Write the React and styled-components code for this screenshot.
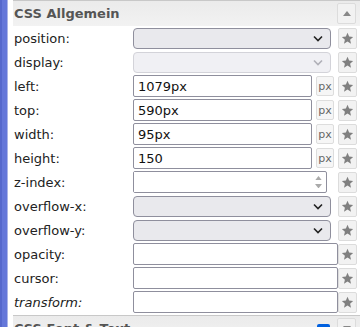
import React from "react";
import styled, { createGlobalStyle } from "styled-components";

const GlobalStyle = createGlobalStyle`
  body {
    margin: 0;
    background: #fff;
    font-family: "DejaVu Sans", Verdana, sans-serif;
    font-size: 13px;
    color: #222;
  }
`;

const Page = styled.div`
  display: flex;
  width: 363px;
  height: 327px;
  overflow: hidden;
`;
const Strip = styled.div`
  width: 8px;
  flex: none;
  background: #6477d9;
  border-left: 2px solid #5568cc;
  box-sizing: border-box;
  border-right: 1px solid #aab4e8;
`;
const Panel = styled.div`
  margin-left: 5px;
  width: 347px;
  display: flex;
  flex-direction: column;
`;
const Header = styled.div`
  height: 26px;
  flex: none;
  display: flex;
  align-items: center;
  box-sizing: border-box;
  border-top: 1px solid #c8c8c8;
  background: linear-gradient(#ebebeb, #f2f2f2);
  padding-left: 1px;
  margin-top: ${(p) => p.gap || 0}px;
  font-weight: bold;
  color: #555;
`;
const HeaderTitle = styled.span`
  flex: 1;
`;
const Row = styled.div`
  height: 24px;
  flex: none;
  display: flex;
  align-items: center;
  padding-left: 1px;
`;
const Label = styled.div`
  width: 119px;
  flex: none;
  font-style: ${(p) => (p.italic ? "italic" : "normal")};
`;
const Control = styled.div`
  width: 205px;
  flex: none;
  display: flex;
  align-items: center;
  gap: 4px;
`;
const SelectBox = styled.div`
  width: 198px;
  height: 21px;
  box-sizing: border-box;
  display: flex;
  align-items: center;
  justify-content: flex-end;
  padding-right: 7px;
  border-radius: 4px;
  border: 1px solid ${(p) => (p.disabled ? "#d3d3d9" : "#8f8f9d")};
  background: ${(p) => (p.disabled ? "#f0f0f4" : "#e9e9ed")};
`;
const TextInput = styled.input`
  width: ${(p) => p.w}px;
  height: 22px;
  box-sizing: border-box;
  border: 1px solid #8f8f9d;
  border-radius: 2px;
  padding: 0 4px;
  margin: 0;
  font-family: "DejaVu Sans", Verdana, sans-serif;
  font-size: 13px;
  color: #111;
  background: #fff;
  outline: none;
`;
const NumberBox = styled.div`
  width: 194px;
  height: 22px;
  box-sizing: border-box;
  border: 1px solid #8f8f9d;
  border-radius: 2px;
  display: flex;
  background: #fff;
`;
const NumberInput = styled.input`
  flex: 1;
  min-width: 0;
  border: 0;
  outline: none;
  padding: 0 4px;
  font-family: "DejaVu Sans", Verdana, sans-serif;
  font-size: 13px;
`;
const Spinner = styled.div`
  width: 10px;
  display: flex;
  flex-direction: column;
  justify-content: space-around;
  align-items: center;
  padding: 2px 3px 2px 0;
`;
const UnitButton = styled.div`
  width: 18px;
  height: 20px;
  box-sizing: border-box;
  border: 1px solid #ddd;
  border-radius: 2px;
  background: #f6f6f6;
  color: #666;
  font-size: 11px;
  display: flex;
  align-items: center;
  justify-content: center;
`;
const IconButton = styled.div`
  width: 19px;
  height: 21px;
  box-sizing: border-box;
  border: 1px solid #dcdcdc;
  border-radius: 2px;
  background: #f2f2f2;
  display: flex;
  align-items: center;
  justify-content: center;
  margin-right: ${(p) => (p.edge ? 4 : 0)}px;
`;
const Check = styled.div`
  width: 13px;
  height: 13px;
  border-radius: 2px;
  background: #0060df;
  display: flex;
  align-items: center;
  justify-content: center;
  margin-right: 7px;
  margin-top: 4px;
`;

const Star = () => (
  <svg width="13" height="13" viewBox="0 0 24 24">
    <path
      d="M12 1.5l3 6.9 7.4.7-5.6 5 1.7 7.4L12 17.6l-6.5 3.9 1.7-7.4-5.6-5 7.4-.7z"
      fill="#808080"
    />
  </svg>
);

const Chevron = ({ color }) => (
  <svg width="10" height="7" viewBox="0 0 10 7">
    <path d="M1 1.5l4 4 4-4" fill="none" stroke={color} strokeWidth="1.6" />
  </svg>
);

const Tri = ({ up, color = "#999", w = 7 }) => (
  <svg width={w} height={w / 2 + 1} viewBox="0 0 8 5">
    <path d={up ? "M0 5L4 0l4 5z" : "M0 0h8L4 5z"} fill={color} />
  </svg>
);

const rows = [
  { label: "position:", kind: "select" },
  { label: "display:", kind: "select", disabled: true },
  { label: "left:", kind: "px", value: "1079px" },
  { label: "top:", kind: "px", value: "590px" },
  { label: "width:", kind: "px", value: "95px" },
  { label: "height:", kind: "px", value: "150" },
  { label: "z-index:", kind: "number" },
  { label: "overflow-x:", kind: "select" },
  { label: "overflow-y:", kind: "select" },
  { label: "opacity:", kind: "text" },
  { label: "cursor:", kind: "text" },
  { label: "transform:", kind: "text", italic: true },
];

function Field({ row }) {
  if (row.kind === "select")
    return (
      <SelectBox disabled={row.disabled}>
        <Chevron color={row.disabled ? "#b0b0b8" : "#222"} />
      </SelectBox>
    );
  if (row.kind === "px")
    return (
      <>
        <TextInput w={179} defaultValue={row.value} />
        <UnitButton>px</UnitButton>
      </>
    );
  if (row.kind === "number")
    return (
      <NumberBox>
        <NumberInput />
        <Spinner>
          <Tri up color="#aaa" />
          <Tri color="#aaa" />
        </Spinner>
      </NumberBox>
    );
  return <TextInput w={205} />;
}

export default function App() {
  return (
    <Page>
      <GlobalStyle />
      <Strip />
      <Panel>
        <Header>
          <HeaderTitle>CSS Allgemein</HeaderTitle>
          <IconButton edge>
            <Tri up color="#888" w={8} />
          </IconButton>
        </Header>
        {rows.map((r) => (
          <Row key={r.label}>
            <Label italic={r.italic}>{r.label}</Label>
            <Control>
              <Field row={r} />
            </Control>
            <IconButton>
              <Star />
            </IconButton>
          </Row>
        ))}
        <Header gap={1}>
          <HeaderTitle>CSS Font &amp; Text</HeaderTitle>
          <Check>
            <svg width="9" height="8" viewBox="0 0 9 8">
              <path d="M1 4l2.5 2.5L8 1" fill="none" stroke="#fff" strokeWidth="1.8" />
            </svg>
          </Check>
          <IconButton edge>
            <Tri color="#888" w={8} />
          </IconButton>
        </Header>
      </Panel>
    </Page>
  );
}
